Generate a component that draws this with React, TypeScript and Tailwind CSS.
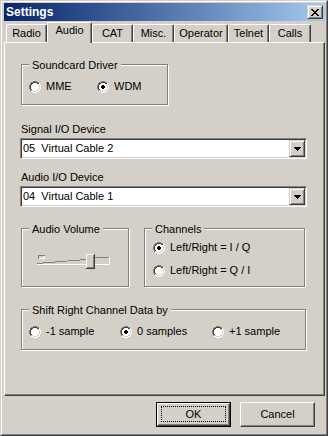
import type { ReactNode } from 'react'

const RADIO_ROWS = [
  '....GGGG....',
  '..GGDDDDGG..',
  '.GDDwwwwDDW.',
  '.GDwwwwwwLW.',
  'GDwwwwwwwwLW',
  'GDwwwwwwwwLW',
  'GDwwwwwwwwLW',
  'GDwwwwwwwwLW',
  '.GDwwwwwwLW.',
  '.GLLwwwwLLW.',
  '..WWLLLLWW..',
  '....WWWW....',
]

const DOT_ROWS = [
  '', '', '', '',
  '.....XX.....',
  '....XXXX....',
  '....XXXX....',
  '.....XX.....',
]

const CLOSE_ROWS = [
  'XX....XX',
  '.XX..XX.',
  '..XXXX..',
  '...XX...',
  '..XXXX..',
  '.XX..XX.',
  'XX....XX',
]

const RADIO_COLORS: Record<string, string> = {
  G: '#808080',
  D: '#404040',
  W: '#ffffff',
  L: '#d4d0c8',
  w: '#ffffff',
}

function pixelPath(rows: string[], ch: string) {
  let d = ''
  rows.forEach((row, y) => {
    for (let x = 0; x < row.length; x++) {
      if (row[x] === ch) d += `M${x} ${y}h1v1h-1z`
    }
  })
  return d
}

function Radio({ checked }: { checked?: boolean }) {
  return (
    <svg width="12" height="12" viewBox="0 0 12 12" shapeRendering="crispEdges" className="shrink-0">
      {Object.entries(RADIO_COLORS).map(([ch, color]) => (
        <path key={ch} d={pixelPath(RADIO_ROWS, ch)} fill={color} />
      ))}
      {checked && <path d={pixelPath(DOT_ROWS, 'X')} fill="#000" />}
    </svg>
  )
}

function RadioItem({ label, checked, className = '' }: { label: string; checked?: boolean; className?: string }) {
  return (
    <div className={`flex items-center gap-[5px] h-[13px] ${className}`}>
      <Radio checked={checked} />
      <span className="whitespace-pre">{label}</span>
    </div>
  )
}

function GroupBox({ title, className = '', children }: { title: string; className?: string; children?: ReactNode }) {
  return (
    <div className={`relative border border-[#808080] shadow-[inset_1px_1px_0_#fff,1px_1px_0_#fff] ${className}`}>
      <span className="absolute top-[-6px] left-[7px] px-[3px] bg-[#d4d0c8]">{title}</span>
      {children}
    </div>
  )
}

function ComboBox({ value, className = '' }: { value: string; className?: string }) {
  return (
    <div
      className={`h-[21px] w-[287px] p-[1px] flex bg-white border border-t-[#808080] border-l-[#808080] border-r-white border-b-white shadow-[inset_1px_1px_0_#404040,inset_-1px_-1px_0_#d4d0c8] ${className}`}
    >
      <div className="flex-1 flex items-center pl-[1px] whitespace-pre">{value}</div>
      <div className="w-[16px] h-[17px] bg-[#d4d0c8] flex items-center justify-center border border-t-[#d4d0c8] border-l-[#d4d0c8] border-r-[#404040] border-b-[#404040] shadow-[inset_1px_1px_0_#fff,inset_-1px_-1px_0_#808080]">
        <svg width="7" height="4" viewBox="0 0 7 4" shapeRendering="crispEdges">
          <path d="M0 0h7v1H0zM1 1h5v1H1zM2 2h3v1H2zM3 3h1v1H3z" fill="#000" />
        </svg>
      </div>
    </div>
  )
}

function Tab({ label, width, selected }: { label: string; width: string; selected?: boolean }) {
  return (
    <div
      className={`${width} ${
        selected ? 'h-[21px] mb-[-1px] z-10 pt-[1px]' : 'h-[18px] pt-[2px]'
      } relative flex justify-center bg-[#d4d0c8] border-l border-t border-r border-l-white border-t-white border-r-[#404040] rounded-t-[2px] shadow-[inset_-1px_0_0_#808080]`}
    >
      {label}
    </div>
  )
}

function VolumeSlider() {
  return (
    <svg width="73" height="15" viewBox="0 0 73 15" shapeRendering="crispEdges">
      <path d="M1 1h7v1H2v3H1z" fill="#808080" />
      <path d="M2 4h6v1H2zM7 2h1v2H7z" fill="#fff" />
      <line x1="0" y1="9.5" x2="49" y2="5.5" stroke="#808080" strokeWidth="1" />
      <path d="M0 10h73v1H0zM72 3h1v7h-1z" fill="#fff" />
      <path d="M57 3h15v1H57z" fill="#808080" />
      <rect x="49" y="0" width="9" height="15" fill="#d4d0c8" />
      <path d="M49 0h8v1H50v13h-1z" fill="#fff" />
      <path d="M56 1h1v13H50v-1h6z" fill="#808080" />
      <path d="M57 0h1v15H49v-1h8z" fill="#404040" />
    </svg>
  )
}

export default function App() {
  return (
    <div className="w-[328px] h-[436px] bg-[#d4d0c8] border border-t-[#d4d0c8] border-l-[#d4d0c8] border-r-[#404040] border-b-[#404040] font-['Liberation_Sans',Arial,sans-serif] text-[11px] leading-[13px] text-black select-none">
      <div className="h-full border border-t-white border-l-white border-r-[#808080] border-b-[#808080] pt-[1px] pl-[2px] pr-[1px] flex flex-col">
        {/* Caption */}
        <div className="h-[18px] shrink-0 flex items-center bg-linear-to-r from-[#0a246a] to-[#a6caf0] pl-[2px] pr-[2px]">
          <span className="flex-1 text-white font-bold text-[12px] leading-[14px]">Settings</span>
          <div className="w-[16px] h-[14px] flex items-center justify-center bg-[#d4d0c8] border border-t-[#d4d0c8] border-l-[#d4d0c8] border-r-[#404040] border-b-[#404040] shadow-[inset_1px_1px_0_#fff,inset_-1px_-1px_0_#808080]">
            <svg width="8" height="7" viewBox="0 0 8 7" shapeRendering="crispEdges" className="mr-[1px]">
              <path d={pixelPath(CLOSE_ROWS, 'X')} fill="#000" />
            </svg>
          </div>
        </div>

        {/* Tabs */}
        <div className="h-[21px] shrink-0 flex items-end pl-[2px]">
          <Tab label="Radio" width="w-[41px]" />
          <Tab label="Audio" width="w-[45px]" selected />
          <Tab label="CAT" width="w-[41px]" />
          <Tab label="Misc." width="w-[41px]" />
          <Tab label="Operator" width="w-[54px]" />
          <Tab label="Telnet" width="w-[41px]" />
          <Tab label="Calls" width="w-[42px]" />
        </div>

        {/* Panel */}
        <div className="h-[354px] w-[321px] shrink-0 flex flex-col border border-t-white border-l-white border-r-[#404040] border-b-[#404040] shadow-[inset_-1px_-1px_0_#808080]">
          <GroupBox title="Soundcard Driver" className="mt-[21px] ml-[16px] w-[147px] h-[41px]">
            <div className="mt-[15px] pl-[7px] flex">
              <RadioItem label="MME" className="w-[68px]" />
              <RadioItem label="WDM" checked />
            </div>
          </GroupBox>

          <div className="mt-[18px] ml-[16px]">Signal I/O Device</div>
          <ComboBox value="05  Virtual Cable 2" className="mt-[2px] ml-[15px]" />

          <div className="mt-[12px] ml-[16px]">Audio I/O Device</div>
          <ComboBox value="04  Virtual Cable 1" className="mt-[2px] ml-[15px]" />

          <div className="mt-[21px] ml-[16px] flex gap-[15px]">
            <GroupBox title="Audio Volume" className="w-[108px] h-[59px]">
              <div className="mt-[25px] ml-[15px] flex">
                <VolumeSlider />
              </div>
            </GroupBox>
            <GroupBox title="Channels" className="w-[161px] h-[59px]">
              <div className="pl-[8px] flex flex-col">
                <RadioItem label="Left/Right = I / Q" checked className="mt-[12px]" />
                <RadioItem label="Left/Right = Q / I" className="mt-[10px]" />
              </div>
            </GroupBox>
          </div>

          <GroupBox title="Shift Right Channel Data by" className="mt-[22px] ml-[16px] w-[285px] h-[41px]">
            <div className="mt-[15px] pl-[7px] flex">
              <RadioItem label="-1 sample" className="w-[91px]" />
              <RadioItem label="0 samples" checked className="w-[92px]" />
              <RadioItem label="+1 sample" />
            </div>
          </GroupBox>
        </div>

        {/* Buttons */}
        <div className="mt-[6px] flex justify-end gap-[9px] pr-[10px]">
          <div className="w-[75px] h-[25px] border border-black">
            <div className="relative h-full flex items-center justify-center border border-t-white border-l-white border-r-[#404040] border-b-[#404040] shadow-[inset_-1px_-1px_0_#808080]">
              <div className="absolute left-[3px] right-[3px] top-[2px] bottom-[3px] border border-dotted border-black" />
              OK
            </div>
          </div>
          <div className="w-[75px] h-[25px] flex items-center justify-center border border-t-white border-l-white border-r-[#404040] border-b-[#404040] shadow-[inset_-1px_-1px_0_#808080]">
            Cancel
          </div>
        </div>
      </div>
    </div>
  )
}
